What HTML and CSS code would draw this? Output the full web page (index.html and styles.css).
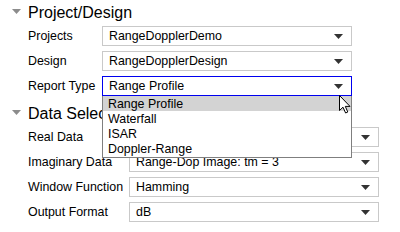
FILE: index.html
```html
<!DOCTYPE html>
<html lang="en">
<head>
    <meta charset="UTF-8">
    <title>Report Settings</title>
    <link rel="stylesheet" href="styles.css">
</head>
<body>
    <div class="panel">
        <section class="group">
            <div class="group-head">
                <svg class="twisty" width="9" height="5" viewBox="0 0 9 5"><polygon points="0,0 9,0 4.5,5"/></svg>
                <span>Project/Design</span>
            </div>
            <div class="field">
                <label>Projects</label>
                <div class="select">
                    <span>RangeDopplerDemo</span>
                    <svg class="caret" width="9" height="5" viewBox="0 0 9 5"><polygon points="0,0 9,0 4.5,5"/></svg>
                </div>
            </div>
            <div class="field">
                <label>Design</label>
                <div class="select">
                    <span>RangeDopplerDesign</span>
                    <svg class="caret" width="9" height="5" viewBox="0 0 9 5"><polygon points="0,0 9,0 4.5,5"/></svg>
                </div>
            </div>
            <div class="field">
                <label>Report Type</label>
                <div class="select focused">
                    <span>Range Profile</span>
                    <svg class="caret" width="9" height="5" viewBox="0 0 9 5"><polygon points="0,0 9,0 4.5,5"/></svg>
                    <ul class="dropdown">
                        <li class="hover">Range Profile</li>
                        <li>Waterfall</li>
                        <li>ISAR</li>
                        <li>Doppler-Range</li>
                    </ul>
                </div>
            </div>
        </section>

        <section class="group wide">
            <div class="group-head">
                <svg class="twisty" width="9" height="5" viewBox="0 0 9 5"><polygon points="0,0 9,0 4.5,5"/></svg>
                <span>Data Selection</span>
            </div>
            <div class="field">
                <label>Real Data</label>
                <div class="select">
                    <span></span>
                    <svg class="caret" width="9" height="5" viewBox="0 0 9 5"><polygon points="0,0 9,0 4.5,5"/></svg>
                </div>
            </div>
            <div class="field">
                <label>Imaginary Data</label>
                <div class="select">
                    <span>Range-Dop Image: tm = 3</span>
                    <svg class="caret" width="9" height="5" viewBox="0 0 9 5"><polygon points="0,0 9,0 4.5,5"/></svg>
                </div>
            </div>
            <div class="field">
                <label>Window Function</label>
                <div class="select">
                    <span>Hamming</span>
                    <svg class="caret" width="9" height="5" viewBox="0 0 9 5"><polygon points="0,0 9,0 4.5,5"/></svg>
                </div>
            </div>
            <div class="field">
                <label>Output Format</label>
                <div class="select">
                    <span>dB</span>
                    <svg class="caret" width="9" height="5" viewBox="0 0 9 5"><polygon points="0,0 9,0 4.5,5"/></svg>
                </div>
            </div>
        </section>

        <!-- mouse pointer sitting over the open list -->
        <svg class="pointer" width="13" height="19" viewBox="0 0 13 19">
            <path d="M0.5 0.5 L0.5 15.5 L4 12.2 L6.6 18 L8.8 17 L6.3 11.4 L11 11.4 Z" fill="#fff" stroke="#000" stroke-width="1" stroke-linejoin="miter"/>
        </svg>
    </div>
</body>
</html>
```

FILE: styles.css
```css
body {
    margin: 0;
    background: #fff;
    font-family: "Liberation Sans", Arial, sans-serif;
    color: #000;
}
.panel {
    position: relative;
    width: 400px;
    height: 232px;
    overflow: hidden;
}
.group {
    margin-bottom: 4px;
}
.group-head {
    display: flex;
    align-items: center;
    height: 26px;
    padding-left: 12px;
    font-size: 16px;
    white-space: nowrap;
}
.twisty {
    fill: #8c8c8c;
    margin-right: 7px;
    margin-bottom: 4px;
}
.field {
    display: flex;
    align-items: center;
    height: 20px;
    margin-bottom: 5px;
    padding-left: 28px;
    font-size: 12.4px;
}
.field label {
    width: 74px;
}
.wide .field label {
    width: 101px;
}
.select {
    position: relative;
    box-sizing: border-box;
    width: 250px;
    height: 20px;
    display: flex;
    align-items: center;
    justify-content: space-between;
    padding: 0 8px 0 6px;
    border: 1px solid #c9c9c9;
    background: #fff;
}
.select.focused {
    border-color: #0000f0;
}
.caret {
    fill: #333;
}
.dropdown {
    position: absolute;
    top: calc(100% + 1px);
    left: -1px;
    right: -1px;
    z-index: 2;
    margin: 0;
    padding: 0 0 1px;
    list-style: none;
    background: #fff;
    border: 1px solid #7f7f7f;
    border-top: none;
}
.dropdown li {
    height: 14px;
    padding: 1px 0 0 5px;
    line-height: 15px;
}
.dropdown li.hover {
    background: #d3d3d3;
}
.pointer {
    position: absolute;
    left: 339px;
    top: 95px;
    z-index: 3;
}
```
